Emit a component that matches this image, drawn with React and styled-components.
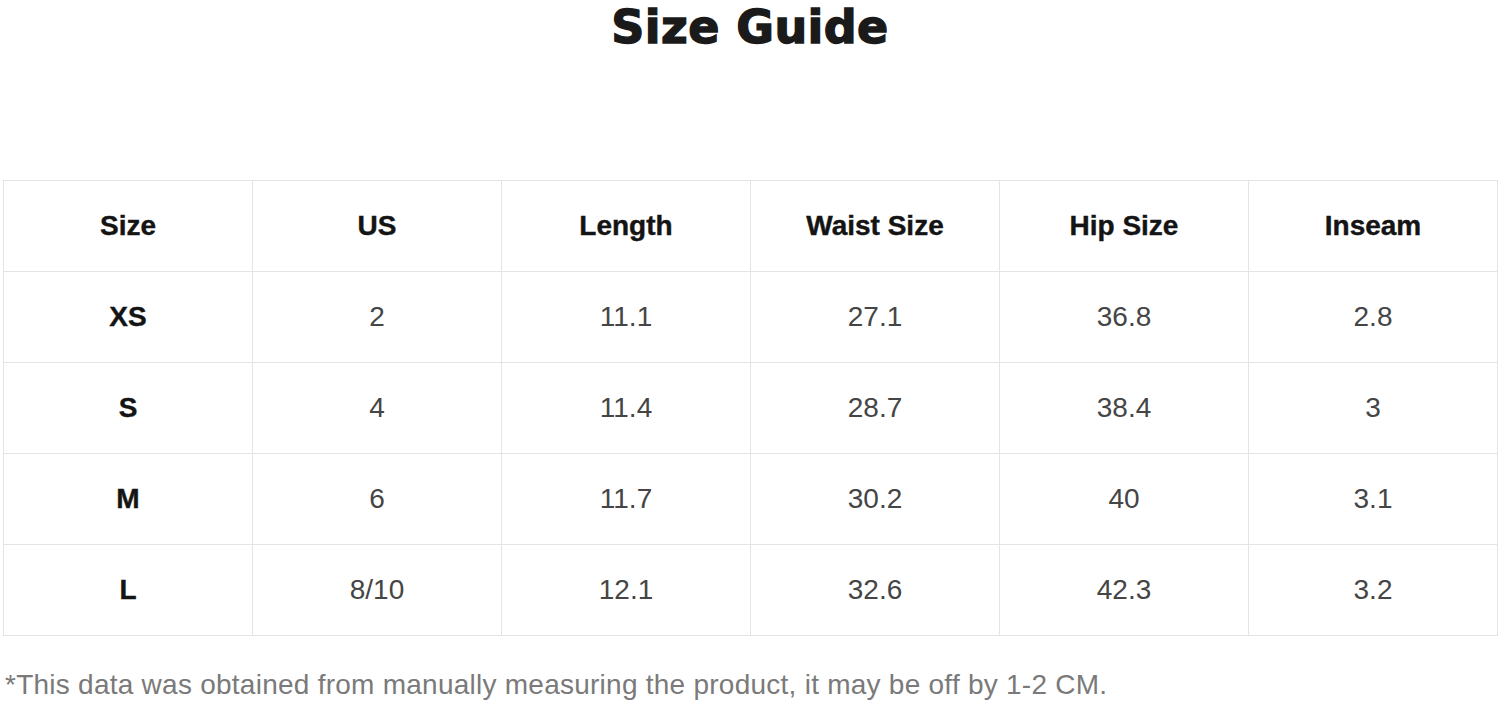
import React from "react";
import styled, { createGlobalStyle } from "styled-components";

const Global = createGlobalStyle`
  html, body { margin: 0; padding: 0; background: #ffffff; }
  body { font-family: "Liberation Sans", Arial, sans-serif; }
`;

const Page = styled.div`
  width: 1500px;
  height: 702px;
  display: flex;
  flex-direction: column;
  align-items: stretch;
  background: #fff;
  overflow: hidden;
`;

const Title = styled.h1`
  margin: 0;
  height: 180px;
  padding-top: 0;
  box-sizing: border-box;
  text-align: center;
  font-family: "DejaVu Sans", "Liberation Sans", sans-serif;
  font-weight: 700;
  font-size: 46px;
  line-height: 54px;
  color: #1a1a1a;
  -webkit-text-stroke: 1.4px #1a1a1a;
  letter-spacing: 0.4px;
`;

const Table = styled.table`
  margin: 0 3px;
  width: 1495px;
  border-collapse: collapse;
  table-layout: fixed;
`;

const Cell = styled.td`
  border: 1px solid #e4e4e4;
  height: 90px;
  padding: 0;
  text-align: center;
  vertical-align: middle;
  font-size: 28px;
  font-weight: ${(p) => (p.$bold ? 700 : 400)};
  color: ${(p) => (p.$bold ? "#141414" : "#454545")};
  -webkit-text-stroke: ${(p) => (p.$bold ? "0.4px #141414" : "0")};
`;

const Note = styled.p`
  margin: 33px 0 0 5px;
  font-size: 28px;
  line-height: 32px;
  letter-spacing: 0.25px;
  color: #7a7a7a;
`;

const headers = ["Size", "US", "Length", "Waist Size", "Hip Size", "Inseam"];
const rows = [
  ["XS", "2", "11.1", "27.1", "36.8", "2.8"],
  ["S", "4", "11.4", "28.7", "38.4", "3"],
  ["M", "6", "11.7", "30.2", "40", "3.1"],
  ["L", "8/10", "12.1", "32.6", "42.3", "3.2"],
];

export default function App() {
  return (
    <Page>
      <Global />
      <Title>Size Guide</Title>
      <Table>
        <tbody>
          <tr>
            {headers.map((h) => (
              <Cell key={h} $bold>
                {h}
              </Cell>
            ))}
          </tr>
          {rows.map((r) => (
            <tr key={r[0]}>
              {r.map((v, i) => (
                <Cell key={i} $bold={i === 0}>
                  {v}
                </Cell>
              ))}
            </tr>
          ))}
        </tbody>
      </Table>
      <Note>
        *This data was obtained from manually measuring the product, it may be off by 1-2 CM.
      </Note>
    </Page>
  );
}
